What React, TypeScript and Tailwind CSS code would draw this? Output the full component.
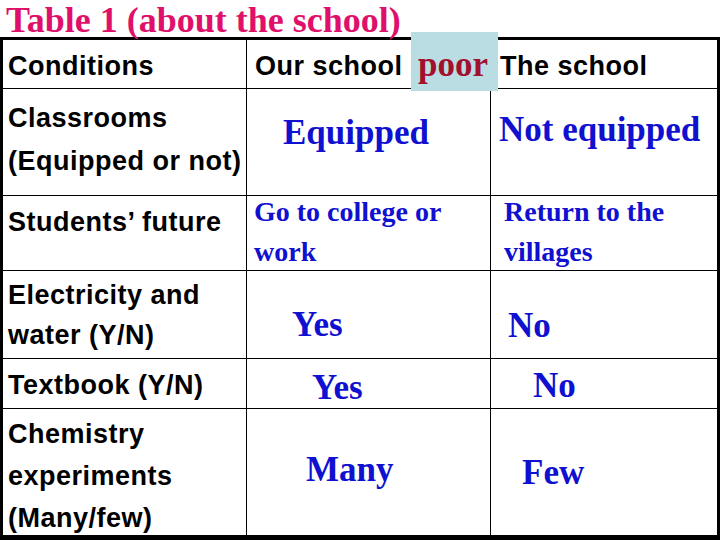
import React from "react";

const sans = { fontFamily: '"Liberation Sans", Arial, sans-serif' };
const serif = { fontFamily: '"Liberation Serif", "Times New Roman", serif' };

function Lines({
  lines,
  className,
  style,
}: {
  lines: string[];
  className: string;
  style?: React.CSSProperties;
}) {
  return (
    <div className={className} style={style}>
      {lines.map((l, i) => (
        <div key={i} className="whitespace-nowrap">
          {l}
        </div>
      ))}
    </div>
  );
}

export default function App() {
  const c1 =
    "w-[244px] shrink-0 border-r border-black pl-[5px] text-[27px] font-bold leading-[30px] tracking-[0.5px] text-black";
  const c2 = "w-[244px] shrink-0 border-r border-black font-bold text-[#1010d0]";
  const c3 = "flex-1 font-bold text-[#1010d0]";
  return (
    <div className="relative h-[540px] w-[720px] overflow-hidden bg-white">
      <div
        className="h-[37px] whitespace-nowrap pl-[6px] text-[36px] font-bold leading-[40px] text-[#e0106a]"
        style={serif}
      >
        Table 1 (about the school)
      </div>
      <div
        className="flex h-[503px] flex-col border-x-[3px] border-t-[3px] border-b-[5px] border-black"
        style={sans}
      >
        {/* header */}
        <div className="flex h-[49px] border-b border-black">
          <div className={c1 + " pt-[11px]"}>Conditions</div>
          <div className="w-[244px] shrink-0 border-r border-black pl-[8px] pt-[11px] text-[27px] font-bold leading-[30px] tracking-[0.5px] text-black">
            Our school
          </div>
          <div className="flex-1 pl-[9px] pt-[11px] text-[27px] font-bold leading-[30px] tracking-[0.5px] text-black">
            The school
          </div>
        </div>
        {/* row 1 */}
        <div className="flex h-[107px] border-b border-black">
          <Lines
            lines={["Classrooms", "(Equipped or not)"]}
            className={c1 + " flex flex-col gap-[13px] pt-[14px]"}
          />
          <div className={c2 + " pl-[36px] pt-[24px] text-[35px] leading-[40px]"} style={serif}>
            Equipped
          </div>
          <div className={c3 + " pl-[8px] pt-[21px] text-[35px] leading-[40px]"} style={serif}>
            Not equipped
          </div>
        </div>
        {/* row 2 */}
        <div className="flex h-[75px] border-b border-black">
          <div className={c1 + " pt-[11px]"}>Students’ future</div>
          <Lines
            lines={["Go to college or", "work"]}
            className={c2 + " flex flex-col gap-[8px] pl-[7px] pt-0 text-[28px] leading-[32px]"}
            style={serif}
          />
          <Lines
            lines={["Return to the", "villages"]}
            className={c3 + " flex flex-col gap-[8px] pl-[13px] pt-0 text-[28px] leading-[32px]"}
            style={serif}
          />
        </div>
        {/* row 3 */}
        <div className="flex h-[88px] border-b border-black">
          <Lines
            lines={["Electricity and", "water (Y/N)"]}
            className={c1 + " flex flex-col gap-[10px] pt-[9px]"}
          />
          <div className={c2 + " pl-[45px] pt-[34px] text-[35px] leading-[40px]"} style={serif}>
            Yes
          </div>
          <div className={c3 + " pl-[17px] pt-[35px] text-[35px] leading-[40px]"} style={serif}>
            No
          </div>
        </div>
        {/* row 4 */}
        <div className="flex h-[50px] border-b border-black">
          <div className={c1 + " pt-[11px]"}>Textbook (Y/N)</div>
          <div className={c2 + " pl-[65px] pt-[9px] text-[35px] leading-[40px]"} style={serif}>
            Yes
          </div>
          <div className={c3 + " pl-[42px] pt-[7px] text-[35px] leading-[40px]"} style={serif}>
            No
          </div>
        </div>
        {/* row 5 */}
        <div className="flex flex-1">
          <Lines
            lines={["Chemistry", "experiments", "(Many/few)"]}
            className={c1 + " flex flex-col gap-[12px] pt-[10px]"}
          />
          <div className={c2 + " pl-[59px] pt-[41px] text-[35px] leading-[40px]"} style={serif}>
            Many
          </div>
          <div className={c3 + " pl-[31px] pt-[44px] text-[35px] leading-[40px]"} style={serif}>
            Few
          </div>
        </div>
      </div>
      {/* poor label overlay */}
      <div
        className="absolute left-[411px] top-[32px] h-[59px] w-[87px] bg-[#b9dde2] pl-[7px] pt-[13px] text-[35px] font-bold leading-[40px] text-[#a3102e]"
        style={serif}
      >
        poor
      </div>
    </div>
  );
}
